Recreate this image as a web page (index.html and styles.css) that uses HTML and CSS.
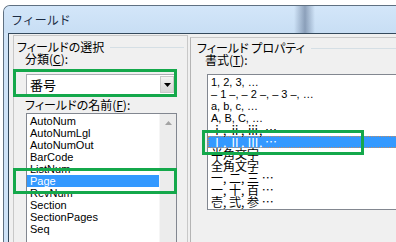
FILE: index.html
```html
<!DOCTYPE html>
<html lang="ja">
<head>
<meta charset="utf-8">
<title>フィールド</title>
<link rel="stylesheet" href="styles.css">
</head>
<body>
<div class="window">
  <div class="titlebar"><span class="title">フィールド</span></div>
  <div class="client">
    <div class="pane pane-left">
      <div class="group-head"><span>フィールドの選択</span><i class="rule"></i></div>
      <div class="section">
        <div class="label">分類(<u>C</u>):</div>
        <div class="combo">
          <span class="combo-text">番号</span>
          <span class="combo-btn"><svg width="7" height="4" viewBox="0 0 7 4"><polygon points="0,0 7,0 3.5,4" fill="#000"/></svg></span>
        </div>
        <div class="label label-gap">フィールドの名前(<u>F</u>):</div>
        <div class="listbox listbox-names">
          <ul class="items">
            <li>AutoNum</li>
            <li>AutoNumLgl</li>
            <li>AutoNumOut</li>
            <li>BarCode</li>
            <li>ListNum</li>
            <li class="sel">Page</li>
            <li>RevNum</li>
            <li>Section</li>
            <li>SectionPages</li>
            <li>Seq</li>
          </ul>
          <div class="vscroll">
            <span class="scroll-btn"><svg width="7" height="4" viewBox="0 0 7 4"><polygon points="0,4 7,4 3.5,0" fill="#a3a3a3"/></svg></span>
          </div>
        </div>
      </div>
    </div>
    <div class="pane pane-right">
      <div class="group-head"><span>フィールド プロパティ</span><i class="rule"></i></div>
      <div class="section">
        <div class="label">書式(<u>T</u>):</div>
        <div class="listbox listbox-format">
          <ul class="items">
            <li>1, 2, 3, …</li>
            <li>– 1 –, – 2 –, – 3 –, …</li>
            <li>a, b, c, …</li>
            <li>A, B, C, …</li>
            <li class="cjk">ⅰ, ⅱ, ⅲ, …</li>
            <li class="cjk sel focus">Ⅰ, Ⅱ, Ⅲ, …</li>
            <li class="cjk">半角文字</li>
            <li class="cjk">全角文字</li>
            <li class="cjk">一, 二, 三 …</li>
            <li class="cjk">一, 十, 百 …</li>
            <li class="cjk">壱, 弐, 参 …</li>
          </ul>
        </div>
      </div>
    </div>
  </div>
</div>
<div class="mark mark-combo"></div>
<div class="mark mark-format"></div>
<div class="mark mark-page"></div>
</body>
</html>
```
FILE: styles.css
```css
html, body {
  margin: 0;
  padding: 0;
}
body {
  width: 396px;
  height: 242px;
  overflow: hidden;
  position: relative;
  background: #ffffff;
  font-family: "Liberation Sans", Arial, sans-serif;
}
.window {
  margin: 5px 0 0 3px;
  width: 440px;
  height: 270px;
  box-sizing: border-box;
  border: 1px solid #5f7081;
  border-right: none;
  border-radius: 7px 0 0 0;
  background: #cfe3f7;
  display: flex;
  flex-direction: column;
}
.titlebar {
  height: 27px;
  flex: none;
  display: flex;
  align-items: center;
  padding-left: 7px;
  border-radius: 6px 0 0 0;
  background:
    linear-gradient(90deg, rgba(120,140,170,0) 290px, rgba(95,115,145,0.6) 301px, rgba(120,140,170,0) 311px),
    linear-gradient(180deg, #d3e6f9 0%, #c8def4 100%);
}
.title {
  font: 12px/12px "Noto Sans CJK JP", sans-serif;
  color: #1b2c44;
}
.client {
  flex: 1;
  margin-left: 4px;
  border-top: 1px solid #34495c;
  border-left: 1px solid #34495c;
  background: #f0f0f0;
  display: flex;
  gap: 2px;
  padding: 1px 0 0 4px;
  align-items: flex-start;
}
.pane {
  box-sizing: border-box;
  align-self: stretch;
}
.pane-left {
  width: 175px;
  flex: none;
  border: 1px solid #c8c8c8;
  border-bottom: none;
  padding: 5px 3px 0 3px;
}
.pane-right {
  flex: 1;
  margin-top: 2px;
  border-top: 1px solid #c8c8c8;
  border-left: 1px solid #b4b4b4;
  padding: 4px 0 0 6px;
}
.group-head {
  display: flex;
  align-items: center;
  height: 12px;
  font: 12px/12px "Noto Sans CJK JP", sans-serif;
  font-feature-settings: "palt";
  color: #000;
  white-space: nowrap;
}
.rule {
  flex: 1;
  height: 0;
  border-top: 1px solid #d5dfe5;
  margin-left: 6px;
}
.section {
  padding-left: 9px;
}
.label {
  height: 12px;
  margin-left: -1px;
  font: 12px/12px "Noto Sans CJK JP", sans-serif;
  font-feature-settings: "palt";
  color: #000;
  white-space: nowrap;
}
.label u {
  text-underline-offset: 1px;
}
.label-gap {
  margin-top: 4px;
}
.combo {
  margin-top: 9px;
  width: 149px;
  height: 21px;
  box-sizing: border-box;
  border: 1px solid #abadb3;
  background: #ffffff;
  display: flex;
  align-items: center;
}
.combo-text {
  flex: 1;
  padding-left: 3px;
  font: 13px/13px "Noto Sans CJK JP", sans-serif;
  color: #000;
}
.combo-btn {
  width: 14px;
  height: 17px;
  box-sizing: border-box;
  border: 1px solid #c9c9c9;
  background: linear-gradient(180deg, #f4f4f4 0%, #e2e2e2 50%, #d6d6d6 100%);
  display: flex;
  align-items: center;
  justify-content: center;
}
.combo-btn svg {
  display: block;
}
.listbox {
  margin-top: 2px;
  box-sizing: border-box;
  border: 1px solid #828790;
  background: #ffffff;
  display: flex;
}
.listbox-names {
  width: 151px;
  height: 140px;
}
.listbox-format {
  margin-top: 8px;
  margin-left: 1px;
  width: 260px;
  height: 136px;
}
.items {
  list-style: none;
  margin: 0;
  padding: 1px 0 0 0;
  flex: 1;
}
.items li {
  height: 12px;
  line-height: 12px;
  padding-left: 3px;
  font-size: 11px;
  color: #000;
  white-space: nowrap;
}
.items li.cjk {
  font: 12px/12px "Noto Sans CJK JP", sans-serif;
  font-feature-settings: "palt";
}
.items li.sel {
  background: #3399ff;
  color: #ffffff;
}
.items li.focus {
  outline: 1px dotted rgba(214, 140, 80, 0.85);
  outline-offset: -1px;
}
.vscroll {
  width: 17px;
  flex: none;
  background: #ececec;
  border-left: 1px solid #f6f6f6;
  box-sizing: border-box;
}
.scroll-btn {
  display: flex;
  height: 17px;
  align-items: center;
  justify-content: center;
}
.scroll-btn svg {
  display: block;
}
.mark {
  position: absolute;
  box-sizing: border-box;
  border: 3px solid #14a84b;
}
.mark-combo {
  left: 13px;
  top: 69px;
  width: 164px;
  height: 28px;
}
.mark-format {
  left: 202px;
  top: 130px;
  width: 162px;
  height: 25px;
}
.mark-page {
  left: 13px;
  top: 168px;
  width: 164px;
  height: 26px;
}
```
